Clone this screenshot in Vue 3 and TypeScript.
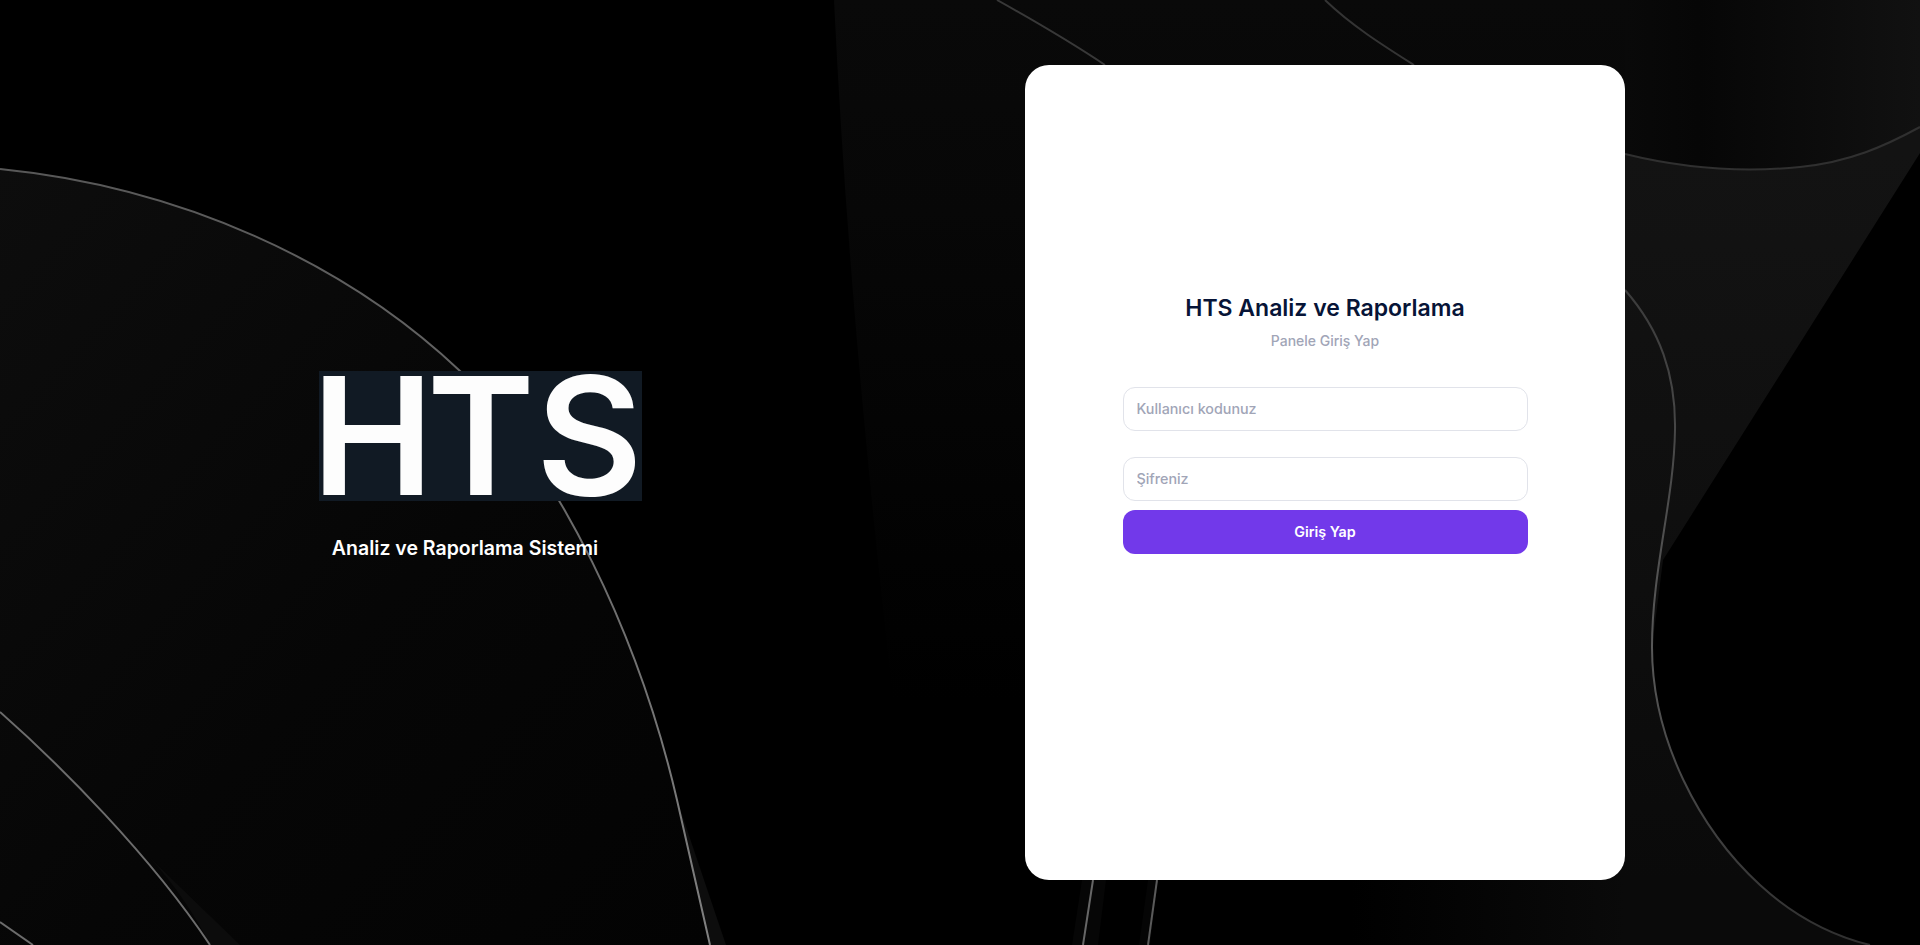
<script setup lang="ts">
const lines: { d: string; tone: string }[] = [
  { d: 'M0 169 C180 187 345 262 460 371 C560 468 640 640 677 800 L710 945', tone: 'url(#lineA)' },
  { d: 'M0 712 C60 765 150 855 210 945', tone: '#6c6c6c' },
  { d: 'M0 922 L33 945', tone: '#6c6c6c' },
  { d: 'M997 0 C1040 24 1075 45 1105 65', tone: '#383838' },
  { d: 'M1325 0 C1352 26 1384 46 1414 65', tone: '#343434' },
  { d: 'M1625 154 C1690 170 1750 172 1800 167 C1850 162 1885 146 1920 127', tone: '#303030' },
  { d: 'M1625 290 C1660 330 1676 375 1675 430 C1674 500 1652 570 1652 647 C1652 740 1700 830 1760 885 C1795 917 1830 935 1870 945', tone: 'url(#lineR)' },
  { d: 'M1093 880 L1083 945', tone: '#666666' },
  { d: 'M1157 880 L1148 945', tone: '#5a5a5a' },
]
</script>

<template>
  <main class="page">
    <svg class="backdrop" viewBox="0 0 1920 945" preserveAspectRatio="none" aria-hidden="true">
      <defs>
        <linearGradient id="leftFill" x1="0" y1="0" x2="1" y2="1">
          <stop offset="0" stop-color="#0d0d0d" />
          <stop offset="0.55" stop-color="#060606" />
          <stop offset="1" stop-color="#030303" />
        </linearGradient>
        <linearGradient id="bandFill" x1="0" y1="0" x2="0" y2="1">
          <stop offset="0" stop-color="#090909" />
          <stop offset="0.3" stop-color="#070707" />
          <stop offset="1" stop-color="#000000" />
        </linearGradient>
        <linearGradient id="topRight" x1="0" y1="0" x2="1" y2="0">
          <stop offset="0" stop-color="#090909" />
          <stop offset="0.25" stop-color="#060606" />
          <stop offset="1" stop-color="#111111" />
        </linearGradient>
        <linearGradient id="funnel" gradientUnits="userSpaceOnUse" x1="0" y1="154" x2="0" y2="880">
          <stop offset="0" stop-color="#131313" />
          <stop offset="0.5" stop-color="#0f0f0f" />
          <stop offset="1" stop-color="#0a0a0a" />
        </linearGradient>
        <linearGradient id="floor" gradientUnits="userSpaceOnUse" x1="1350" y1="0" x2="1625" y2="0">
          <stop offset="0" stop-color="#000000" />
          <stop offset="1" stop-color="#0a0a0a" />
        </linearGradient>
        <linearGradient id="lineA" gradientUnits="userSpaceOnUse" x1="0" y1="169" x2="0" y2="945">
          <stop offset="0" stop-color="#585858" />
          <stop offset="1" stop-color="#808080" />
        </linearGradient>
        <linearGradient id="lineR" gradientUnits="userSpaceOnUse" x1="0" y1="290" x2="0" y2="945">
          <stop offset="0" stop-color="#3c3c3c" />
          <stop offset="0.55" stop-color="#585858" />
          <stop offset="1" stop-color="#303030" />
        </linearGradient>
      </defs>
      <rect width="1920" height="945" fill="#000" />
      <path d="M0 169 C180 187 345 262 460 371 C560 468 640 640 677 800 L710 945 L0 945 Z" fill="url(#leftFill)" />
      <path d="M150 858 C175 885 195 915 210 945 L240 945 Z" fill="#0c0c0c" />
      <path d="M677 800 L710 945 L726 945 Z" fill="#0d0d0d" />
      <path d="M834 0 C845 230 865 450 893 700 L1625 700 L1625 0 Z" fill="url(#bandFill)" />
      <path d="M1625 0 H1920 V127 C1885 146 1850 162 1800 167 C1750 172 1690 170 1625 154 Z" fill="url(#topRight)" />
      <path d="M1625 154 C1690 170 1750 172 1800 167 C1850 162 1885 146 1920 127 V153 L1663 560 L1652 647 C1652 740 1700 830 1760 885 L1625 885 Z" fill="url(#funnel)" />
      <path d="M1350 850 H1625 V880 H1756 C1795 917 1830 935 1870 945 H1350 Z" fill="url(#floor)" />
      <path d="M1082 880 L1072 945 L1098 945 L1106 880 Z" fill="#060606" />
      <path d="M1148 880 L1139 945 L1150 945 L1158 880 Z" fill="#050505" />
      <path v-for="(line, i) in lines" :key="i" :d="line.d" class="line" :stroke="line.tone" />
    </svg>

    <section class="brand">
      <div class="logo"><span class="kern-h">H</span><span class="kern-t">T</span>S</div>
      <p class="tagline">Analiz ve Raporlama Sistemi</p>
    </section>

    <section class="panel">
      <div class="card">
        <form class="form" @submit.prevent>
          <h1 class="title">HTS Analiz ve Raporlama</h1>
          <p class="subtitle">Panele Giriş Yap</p>
          <input class="field first" type="text" placeholder="Kullanıcı kodunuz" />
          <input class="field second" type="password" placeholder="Şifreniz" />
          <button class="submit" type="submit">Giriş Yap</button>
        </form>
      </div>
    </section>
  </main>
</template>

<style>
html, body {
  margin: 0;
  background: #000;
}
</style>

<style scoped>
.page {
  position: relative;
  display: grid;
  grid-template-columns: 960px 960px;
  width: 1920px;
  height: 945px;
  overflow: hidden;
  font-family: Inter, "Noto Sans", sans-serif;
}
.backdrop {
  position: absolute;
  inset: 0;
  width: 100%;
  height: 100%;
}
.line {
  fill: none;
  stroke-width: 2;
}
.brand {
  position: relative;
  display: flex;
  flex-direction: column;
  align-items: center;
  padding-top: 371px;
}
.logo {
  box-sizing: border-box;
  width: 323px;
  height: 130px;
  background: #111a24;
  color: #fdfdfd;
  font-size: 164px;
  font-weight: 560;
  line-height: 130px;
  white-space: nowrap;
  text-indent: -7px;
}
.kern-h {
  letter-spacing: -7px;
}
.kern-t {
  letter-spacing: 1px;
}
.tagline {
  margin: 34px 30px 0 0;
  color: #fff;
  font-size: 19.5px;
  font-weight: 600;
  line-height: 26px;
}
.panel {
  position: relative;
  padding: 65px 0 65px 65px;
}
.card {
  box-sizing: border-box;
  width: 600px;
  height: 815px;
  padding: 0 97.5px;
  background: #fff;
  border-radius: 24px;
}
.form {
  display: flex;
  flex-direction: column;
  padding-top: 229px;
}
.title {
  margin: 0;
  color: #071437;
  font-size: 23px;
  font-weight: 600;
  line-height: 28px;
  text-align: center;
}
.subtitle {
  margin: 10px 0 0;
  color: #a1a5b7;
  font-size: 13.975px;
  font-weight: 500;
  line-height: 18px;
  text-align: center;
}
.field {
  box-sizing: border-box;
  width: 100%;
  height: 44px;
  padding: 0 13px 1px;
  border: 1px solid #e1e3ea;
  border-radius: 12px;
  outline: none;
  background: #fff;
  color: #4b5675;
  font-family: inherit;
  font-size: 14.3px;
  font-weight: 500;
}
.field::placeholder {
  color: #a1a5b7;
  opacity: 1;
}
.first {
  margin-top: 37px;
}
.second {
  margin-top: 26px;
}
.submit {
  height: 44px;
  margin-top: 9px;
  padding: 0 0 1px;
  border: 0;
  border-radius: 12px;
  background: #7239ea;
  color: #fff;
  font-family: inherit;
  font-size: 14.3px;
  font-weight: 600;
}
</style>
